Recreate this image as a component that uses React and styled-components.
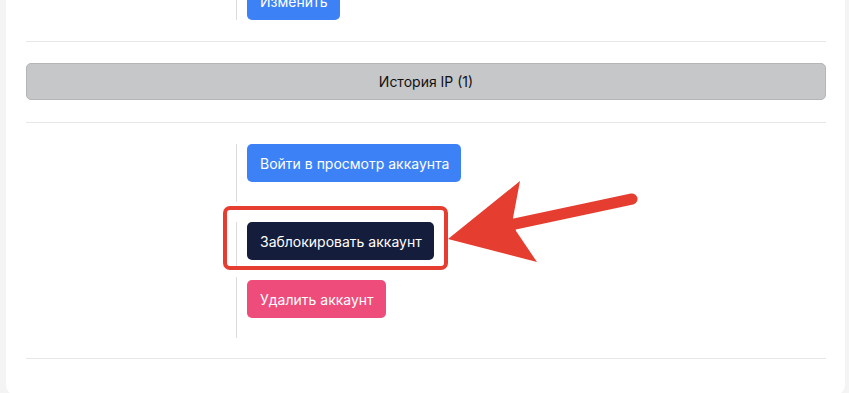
import styled, { createGlobalStyle } from 'styled-components'

const Global = createGlobalStyle`
	html, body {
		margin: 0;
		background: #f4f4f5;
		font-family: Inter, "Noto Sans", sans-serif;
	}
`

const Page = styled.div`
	position: relative;
	height: 393px;
	overflow: hidden;
	padding: 0 4px 0 6px;
`

const Card = styled.div`
	background: #ffffff;
	border-radius: 0 0 10px 10px;
	padding: 0 19px 36px 20px;
`

const Row = styled.div`
	display: grid;
	grid-template-columns: 210px 1fr;
	margin-top: ${p => p.$top || 0}px;
`

const Actions = styled.div`
	display: flex;
	flex-direction: column;
	align-items: flex-start;
`

const ActionItem = styled.div`
	position: relative;
	border-left: 1px solid #dcdcdc;
	padding: ${p => p.$pt || 0}px 0 ${p => p.$pb || 0}px 10px;
	margin-top: ${p => p.$mt || 0}px;
`

const Button = styled.button`
	height: 38px;
	padding: 0 12px 0 13px;
	border: none;
	border-radius: 5px;
	font-family: Inter, "Noto Sans", sans-serif;
	font-size: 14px;
	color: #ffffff;
	background: ${p => p.$bg};
	cursor: pointer;
	white-space: nowrap;
`

const Divider = styled.hr`
	border: none;
	border-top: 1px solid #e7e7e7;
	margin: ${p => p.$mt}px 0 ${p => p.$mb}px;
`

const HistoryBar = styled.button`
	display: block;
	width: 100%;
	height: 37px;
	background: #c6c7c9;
	border: 1px solid #b4b5b7;
	border-radius: 5px;
	font-family: Inter, "Noto Sans", sans-serif;
	font-size: 14px;
	color: #111111;
	cursor: pointer;
`

const Highlight = styled.div`
	position: absolute;
	left: -14px;
	top: -16px;
	width: 225px;
	height: 64px;
	box-sizing: border-box;
	border: 4px solid #e53e30;
	border-radius: 7px;
	pointer-events: none;
`

const Arrow = styled.svg`
	position: absolute;
	left: 440px;
	top: 175px;
	pointer-events: none;
`

const App = () => {
	return (
		<Page>
			<Global />
			<Card>
				<Row $top={-18}>
					<div />
					<Actions>
						<ActionItem>
							<Button $bg="#3c82f6">Изменить</Button>
						</ActionItem>
					</Actions>
				</Row>
				<Divider $mt={21} $mb={21} />
				<HistoryBar>История IP (1)</HistoryBar>
				<Divider $mt={22} $mb={21} />
				<Row>
					<div />
					<Actions>
						<ActionItem $pb={20}>
							<Button $bg="#3c82f6">Войти в просмотр аккаунта</Button>
						</ActionItem>
						<ActionItem $mt={20} $pb={8}>
							<Button $bg="#141e3c">Заблокировать аккаунт</Button>
							<Highlight />
						</ActionItem>
						<ActionItem $mt={9} $pt={3} $pb={20}>
							<Button $bg="#ee4c7b">Удалить аккаунт</Button>
						</ActionItem>
					</Actions>
				</Row>
				<Divider $mt={20} $mb={0} />
			</Card>
			<Arrow width="210" height="100" viewBox="0 0 210 100">
				<line x1="70" y1="50" x2="192" y2="24" stroke="#e53e30" strokeWidth="11" strokeLinecap="round" />
				<polygon points="8,64 80,6 73,43 76,56 97,87" fill="#e53e30" />
			</Arrow>
		</Page>
	)
}

export default App
